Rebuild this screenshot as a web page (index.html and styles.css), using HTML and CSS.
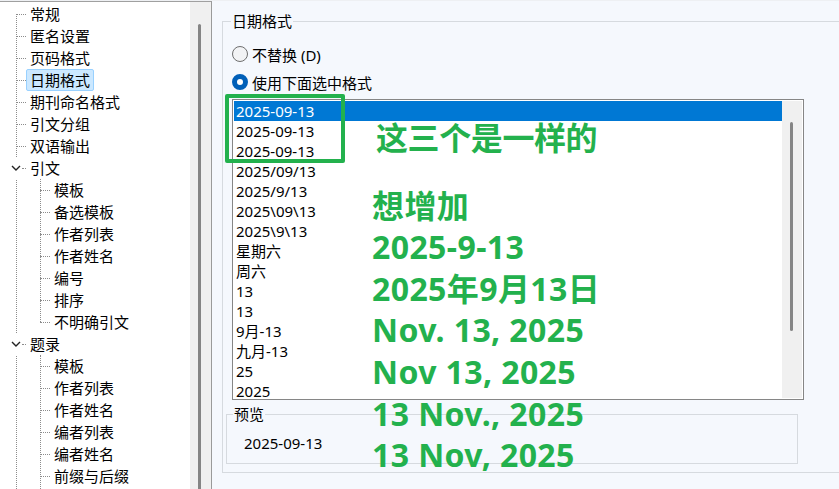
FILE: index.html
```html
<!DOCTYPE html>
<html lang="zh-CN">
<head>
    <meta charset="UTF-8">
    <meta name="viewport" content="width=device-width, initial-scale=1.0">
    <title>日期格式</title>
    <link rel="stylesheet" href="styles.css">
</head>
<body>
    <div class="app">
        <div class="nav">
            <div class="tree">
                <ul class="tree-root">
                    <li><div class="row"><span class="node">常规</span></div></li>
                    <li><div class="row"><span class="node">匿名设置</span></div></li>
                    <li><div class="row"><span class="node">页码格式</span></div></li>
                    <li><div class="row"><span class="node is-selected">日期格式</span></div></li>
                    <li><div class="row"><span class="node">期刊命名格式</span></div></li>
                    <li><div class="row"><span class="node">引文分组</span></div></li>
                    <li><div class="row"><span class="node">双语输出</span></div></li>
                    <li class="is-open">
                        <div class="row">
                            <span class="toggle"><svg width="10" height="6" viewBox="0 0 10 6"><polyline points="1,1 5,5 9,1" fill="none" stroke="#222" stroke-width="1.4"/></svg></span>
                            <span class="node">引文</span>
                        </div>
                        <ul class="tree-sub">
                            <li><div class="row"><span class="node">模板</span></div></li>
                            <li><div class="row"><span class="node">备选模板</span></div></li>
                            <li><div class="row"><span class="node">作者列表</span></div></li>
                            <li><div class="row"><span class="node">作者姓名</span></div></li>
                            <li><div class="row"><span class="node">编号</span></div></li>
                            <li><div class="row"><span class="node">排序</span></div></li>
                            <li><div class="row"><span class="node">不明确引文</span></div></li>
                        </ul>
                    </li>
                    <li class="is-open">
                        <div class="row">
                            <span class="toggle"><svg width="10" height="6" viewBox="0 0 10 6"><polyline points="1,1 5,5 9,1" fill="none" stroke="#222" stroke-width="1.4"/></svg></span>
                            <span class="node">题录</span>
                        </div>
                        <ul class="tree-sub tree-sub-open">
                            <li><div class="row"><span class="node">模板</span></div></li>
                            <li><div class="row"><span class="node">作者列表</span></div></li>
                            <li><div class="row"><span class="node">作者姓名</span></div></li>
                            <li><div class="row"><span class="node">编者列表</span></div></li>
                            <li><div class="row"><span class="node">编者姓名</span></div></li>
                            <li><div class="row"><span class="node">前缀与后缀</span></div></li>
                        </ul>
                    </li>
                </ul>
            </div>
            <div class="nav-scroll"><div class="thumb"></div></div>
        </div>

        <div class="main">
            <div class="group">
                <div class="group-title">日期格式</div>
                <label class="radio"><span class="radio-mark"></span>不替换 (D)</label>
                <label class="radio radio-second"><span class="radio-mark is-checked"></span>使用下面选中格式</label>

                <div class="listbox">
                    <ul class="list-items">
                        <li class="is-selected">2025-09-13</li>
                        <li>2025-09-13</li>
                        <li>2025-09-13</li>
                        <li>2025/09/13</li>
                        <li>2025/9/13</li>
                        <li>2025\09\13</li>
                        <li>2025\9\13</li>
                        <li>星期六</li>
                        <li>周六</li>
                        <li>13</li>
                        <li>13</li>
                        <li>9月-13</li>
                        <li>九月-13</li>
                        <li>25</li>
                        <li>2025</li>
                    </ul>
                    <div class="list-scroll"><div class="thumb"></div></div>
                </div>

                <div class="group preview">
                    <div class="group-title">预览</div>
                    <div class="preview-value">2025-09-13</div>
                </div>
            </div>
        </div>

        <!-- annotations drawn on top of the screenshot -->
        <div class="mark-box"></div>
        <div class="note">
            <div class="note-head">这三个是一样的</div>
            <div>想增加</div>
            <div>2025-9-13</div>
            <div>2025年9月13日</div>
            <div>Nov. 13, 2025</div>
            <div>Nov 13, 2025</div>
            <div>13 Nov., 2025</div>
            <div>13 Nov, 2025</div>
        </div>
    </div>
</body>
</html>
```

FILE: styles.css
```css
body {
    margin: 0;
    font-family: "Noto Sans", "Noto Sans CJK SC", sans-serif;
    font-size: 15px;
    color: #000000;
    background: #f5f8fd;
}

ul {
    list-style: none;
    margin: 0;
    padding: 0;
}

.app {
    position: relative;
    display: flex;
    height: 488px;
    border-top: 1px solid #eef0f3;
    overflow: hidden;
}

/* left tree */

.nav {
    display: flex;
    width: 212px;
    flex-shrink: 0;
    border-top: 1px solid #a0a0a0;
    border-right: 1px solid #9a9a9a;
    box-sizing: border-box;
}

.tree {
    width: 190px;
    background: #ffffff;
    overflow: hidden;
}

.tree-root {
    position: relative;
    padding-top: 1px;
}

.tree-root::before {
    content: "";
    position: absolute;
    left: 16px;
    top: 12px;
    bottom: 0;
    border-left: 1px dotted #8c8c8c;
}

.tree-sub {
    position: relative;
}

.tree-sub::before {
    content: "";
    position: absolute;
    left: 40px;
    top: 0;
    bottom: 11px;
    border-left: 1px dotted #8c8c8c;
}

.tree-sub-open {
    padding-bottom: 12px;
}

.tree-sub-open::before {
    bottom: 0;
}

.row {
    display: flex;
    align-items: center;
    height: 22px;
    padding-left: 16px;
}

.row::before {
    content: "";
    width: 10px;
    border-top: 1px dotted #8c8c8c;
}

.tree-sub .row {
    padding-left: 40px;
}

.is-open > .row {
    padding-left: 10px;
}

.is-open > .row::before {
    width: 4px;
}

.toggle {
    order: -1;
    position: relative;
    z-index: 1;
    display: flex;
    align-items: center;
    justify-content: center;
    width: 12px;
    height: 22px;
    background: #ffffff;
}

.node {
    height: 22px;
    line-height: 20px;
    padding: 0 3px;
    border: 1px solid transparent;
    border-radius: 2px;
    box-sizing: border-box;
    white-space: nowrap;
}

.node.is-selected {
    background: #cce8ff;
    border-color: #99d1ff;
}

.nav-scroll {
    width: 21px;
    background: #f0f0f0;
}

.thumb {
    width: 3px;
    background: #858585;
    border-radius: 2px;
}

.nav-scroll .thumb {
    margin: 22px 0 0 8px;
    height: 480px;
}

/* right side */

.main {
    flex: 1;
    padding-left: 10px;
    overflow: hidden;
}

.group {
    width: 660px;
    margin-top: 20px;
    padding-bottom: 8px;
    border: 1px solid #d6dadf;
}

.group-title {
    width: fit-content;
    line-height: 20px;
    margin: -11px 0 0 8px;
    padding: 0 1px;
    background: #f5f8fd;
}

.radio {
    display: flex;
    align-items: center;
    gap: 4px;
    height: 20px;
    margin: 13px 0 0 9px;
}

.radio-second {
    margin-top: 8px;
}

.radio-mark {
    width: 16px;
    height: 16px;
    border: 1px solid #6e6e6e;
    border-radius: 50%;
    background: #f2f3f5;
    box-sizing: border-box;
}

.radio-mark.is-checked {
    border: 5px solid #005fb8;
    background: #ffffff;
}

.listbox {
    display: flex;
    width: 572px;
    height: 301px;
    margin: 7px 0 0 9px;
    padding: 1px;
    border: 1px solid #868686;
    background: #ffffff;
    box-sizing: border-box;
}

.list-items {
    flex: 1;
    overflow: hidden;
}

.list-items li {
    height: 20px;
    line-height: 20px;
    padding-left: 2px;
    white-space: nowrap;
}

.list-items li.is-selected {
    background: #0078d4;
    color: #ffffff;
}

.list-scroll {
    width: 20px;
    background: #f0f0f0;
}

.list-scroll .thumb {
    margin: 21px 0 0 8px;
    height: 209px;
}

.preview {
    width: 572px;
    margin: 14px 0 0 3px;
    padding-bottom: 10px;
    box-sizing: border-box;
}

.preview .group-title {
    margin-left: 6px;
}

.preview-value {
    margin-top: 9px;
    padding-left: 17px;
    line-height: 20px;
}

/* green annotations */

.mark-box {
    position: absolute;
    left: 225px;
    top: 93px;
    width: 120px;
    height: 69px;
    border: 4px solid #23b14d;
    border-radius: 2px;
    box-sizing: border-box;
}

.note {
    position: absolute;
    left: 372px;
    top: 116px;
    color: #23b14d;
    font-family: "Noto Sans", "Noto Sans CJK SC", sans-serif;
    font-weight: 700;
    font-size: 32px;
    letter-spacing: 0.4px;
    line-height: 41.6px;
    white-space: nowrap;
}

.note-head {
    margin: 0 0 26px 4px;
    letter-spacing: -0.4px;
}
```
